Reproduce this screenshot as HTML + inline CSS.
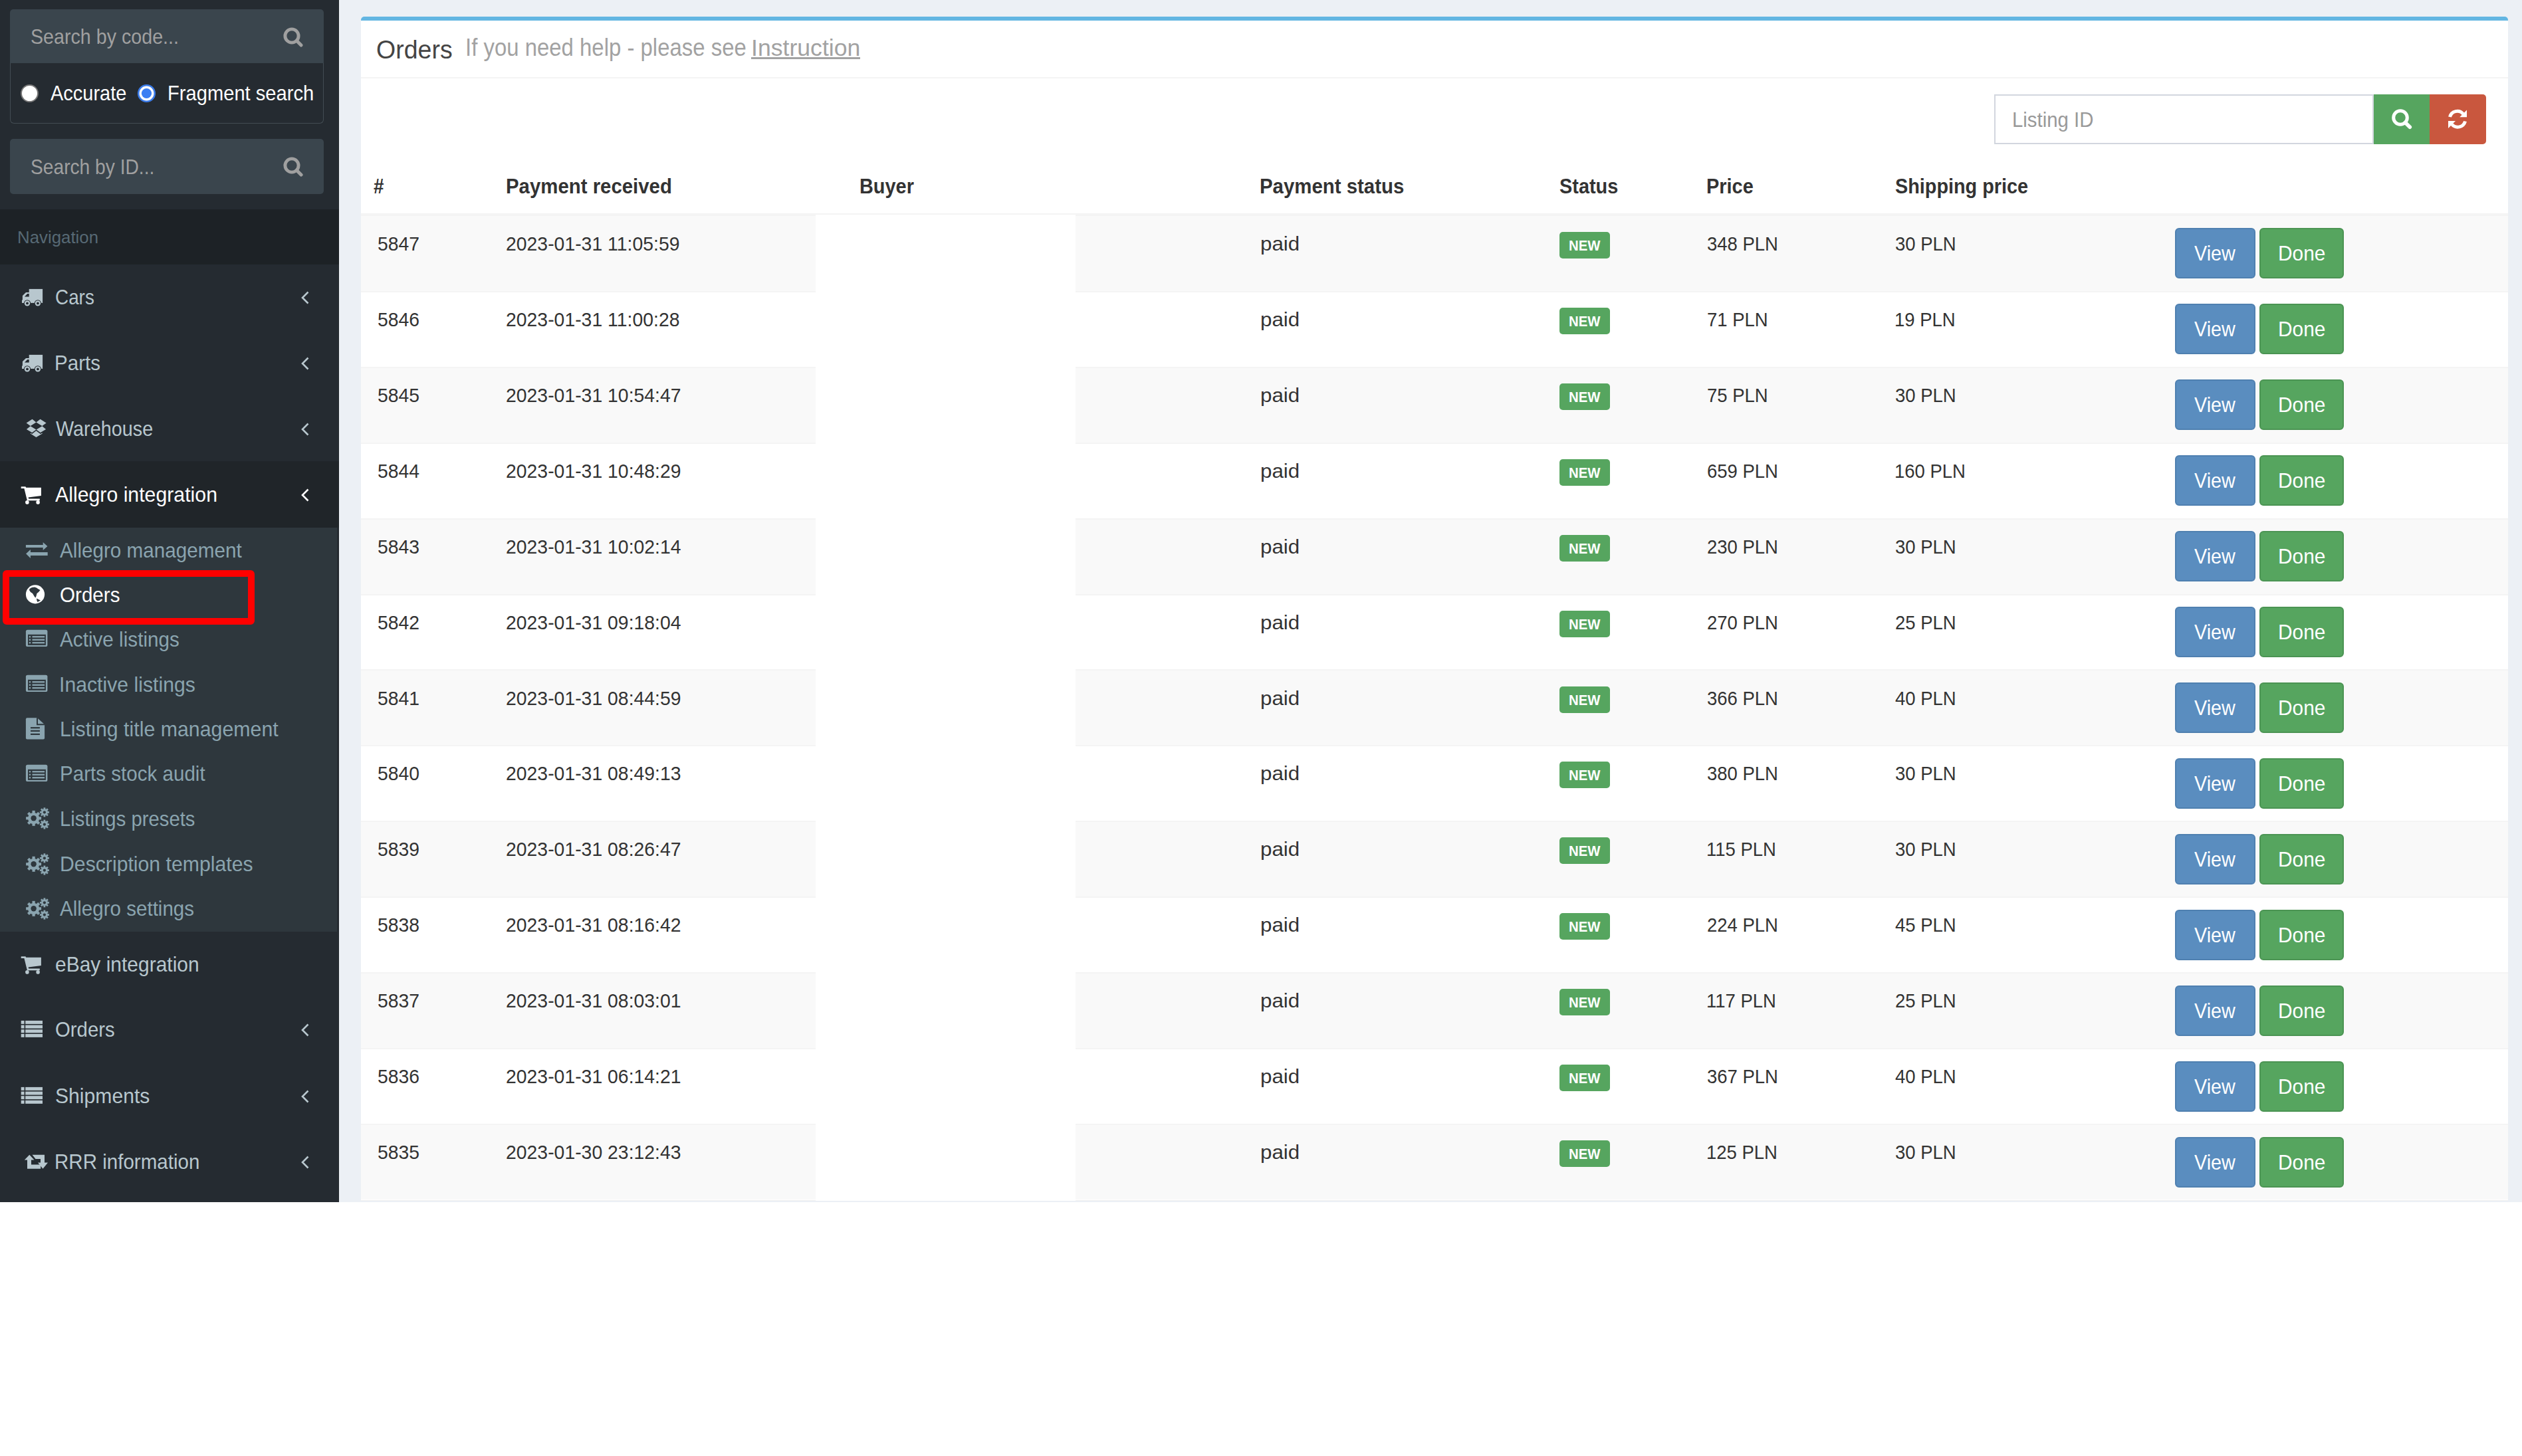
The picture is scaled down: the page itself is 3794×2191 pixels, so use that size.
<!DOCTYPE html><html><head><meta charset="utf-8"><style>
html,body{margin:0;padding:0;}
body{width:3794px;height:2191px;background:#fff;position:relative;overflow:hidden;font-family:"Liberation Sans",sans-serif;}
.t{position:absolute;white-space:nowrap;line-height:normal;transform-origin:0 0;}
.r{position:absolute;}
</style></head><body>
<div class="r" style="left:0px;top:0px;width:510px;height:1809px;background:#252b31;"></div>
<div class="r" style="left:15px;top:14px;width:472px;height:81px;background:#3a454d;border-radius:5px 5px 0 0;"></div>
<div class="r" style="left:15px;top:95px;width:472px;height:91px;background:transparent;box-sizing:border-box;border:1px solid #434c53;border-top:none;border-radius:0 0 6px 6px;"></div>
<div class="t" style="left:45.71px;top:38.20px;font-size:30.5px;color:#a0a0a0;transform:scaleX(0.9393);">Search by code...</div>
<svg class="r" style="left:419.4px;top:33.6px;" width="40" height="40" viewBox="0 0 40 40"><circle cx="20" cy="20" r="10.1" fill="none" stroke="#a0a0a0" stroke-width="4.9"/><line x1="27.27" y1="27.27" x2="34.00" y2="34.00" stroke="#a0a0a0" stroke-width="5.2" stroke-linecap="round"/></svg>
<svg class="r" style="left:30px;top:126px;" width="29" height="29" viewBox="0 0 29 29"><circle cx="14.5" cy="14.5" r="12.5" fill="#fff" stroke="#767676" stroke-width="2"/></svg>
<svg class="r" style="left:206px;top:126px;" width="29" height="29" viewBox="0 0 29 29"><circle cx="14.5" cy="14.5" r="12.3" fill="#fff" stroke="#3b7be8" stroke-width="2.6"/><circle cx="14.5" cy="14.5" r="7.6" fill="#3b7ef3"/></svg>
<div class="t" style="left:75.93px;top:122.50px;font-size:30.5px;color:#fff;transform:scaleX(0.9500);">Accurate</div>
<div class="t" style="left:251.60px;top:122.50px;font-size:30.5px;color:#fff;transform:scaleX(0.9554);">Fragment search</div>
<div class="r" style="left:15px;top:209px;width:472px;height:83px;background:#3a454d;border-radius:5px;"></div>
<div class="t" style="left:45.73px;top:233.70px;font-size:30.5px;color:#a0a0a0;transform:scaleX(0.9238);">Search by ID...</div>
<svg class="r" style="left:419.4px;top:228.6px;" width="40" height="40" viewBox="0 0 40 40"><circle cx="20" cy="20" r="10.1" fill="none" stroke="#a0a0a0" stroke-width="4.9"/><line x1="27.27" y1="27.27" x2="34.00" y2="34.00" stroke="#a0a0a0" stroke-width="5.2" stroke-linecap="round"/></svg>
<div class="r" style="left:0px;top:315px;width:510px;height:83px;background:#1d2226;"></div>
<div class="t" style="left:25.57px;top:342.30px;font-size:26.5px;color:#576974;transform:scaleX(0.9747);">Navigation</div>
<div class="r" style="left:0px;top:694px;width:510px;height:100px;background:#202529;"></div>
<div class="r" style="left:0px;top:794px;width:507px;height:608px;background:#2e373d;"></div>
<div class="t" style="left:82.61px;top:430.00px;font-size:30.5px;color:#b8c7ce;transform:scaleX(0.9137);">Cars</div>
<svg class="r" style="left:32px;top:434px;" width="34" height="28" viewBox="0 0 34 28"><g fill="#b8c7ce"><rect x="11.7" y="0.9" width="20.4" height="21"/><path d="M1.9 21.9 V11 L7 5.9 H12 V21.9 Z"/><rect x="1" y="17.5" width="2" height="4.4"/></g>
        <path d="M5 12.6 L9.2 8 H11.7 V12.6 Z" fill="#252b31"/>
        <circle cx="9" cy="22.4" r="5.2" fill="#252b31"/><circle cx="24.9" cy="22.4" r="5.2" fill="#252b31"/>
        <circle cx="9" cy="22.4" r="4.2" fill="#b8c7ce"/><circle cx="24.9" cy="22.4" r="4.2" fill="#b8c7ce"/>
        <circle cx="9" cy="22.4" r="1.9" fill="#252b31"/><circle cx="24.9" cy="22.4" r="1.9" fill="#252b31"/></svg>
<svg class="r" style="left:452px;top:438px;" width="14" height="20" viewBox="0 0 14 20"><path d="M11.5 1.5 L3 10 L11.5 18.5" fill="none" stroke="#b8c7ce" stroke-width="2.6"/></svg>
<div class="t" style="left:81.56px;top:529.00px;font-size:30.5px;color:#b8c7ce;transform:scaleX(0.9685);">Parts</div>
<svg class="r" style="left:32px;top:533px;" width="34" height="28" viewBox="0 0 34 28"><g fill="#b8c7ce"><rect x="11.7" y="0.9" width="20.4" height="21"/><path d="M1.9 21.9 V11 L7 5.9 H12 V21.9 Z"/><rect x="1" y="17.5" width="2" height="4.4"/></g>
        <path d="M5 12.6 L9.2 8 H11.7 V12.6 Z" fill="#252b31"/>
        <circle cx="9" cy="22.4" r="5.2" fill="#252b31"/><circle cx="24.9" cy="22.4" r="5.2" fill="#252b31"/>
        <circle cx="9" cy="22.4" r="4.2" fill="#b8c7ce"/><circle cx="24.9" cy="22.4" r="4.2" fill="#b8c7ce"/>
        <circle cx="9" cy="22.4" r="1.9" fill="#252b31"/><circle cx="24.9" cy="22.4" r="1.9" fill="#252b31"/></svg>
<svg class="r" style="left:452px;top:537px;" width="14" height="20" viewBox="0 0 14 20"><path d="M11.5 1.5 L3 10 L11.5 18.5" fill="none" stroke="#b8c7ce" stroke-width="2.6"/></svg>
<div class="t" style="left:83.86px;top:628.00px;font-size:30.5px;color:#b8c7ce;transform:scaleX(0.9440);">Warehouse</div>
<svg class="r" style="left:39px;top:630px;" width="31" height="28" viewBox="0 0 31 28"><g fill="#b8c7ce"><path d="M9.5 0.7 L15.4 5.5 L6.8 11 L0.6 6.4 Z"/><path d="M21.6 0.7 L30.6 6.4 L24.4 11 L15.4 5.5 Z"/><path d="M0.9 16 L6.8 11.3 L15.4 16.6 L9.2 20.9 Z"/><path d="M30.1 16 L24.4 11.3 L15.6 16.6 L21.8 20.9 Z"/><path d="M6.8 21.6 L9.2 23.1 L15.4 18.2 L21.8 23.1 L24.7 21.6 V22.4 L15.4 27.9 L6.8 22.6 Z"/></g></svg>
<svg class="r" style="left:452px;top:636px;" width="14" height="20" viewBox="0 0 14 20"><path d="M11.5 1.5 L3 10 L11.5 18.5" fill="none" stroke="#b8c7ce" stroke-width="2.6"/></svg>
<div class="t" style="left:82.92px;top:727.00px;font-size:30.5px;color:#fff;transform:scaleX(0.9924);">Allegro integration</div>
<svg class="r" style="left:31px;top:731px;" width="32" height="29" viewBox="0 0 32 29"><g fill="#fff"><path d="M0.7 1.2 H7.4 L8.3 2.7 H30.9 V15.1 L11.6 17.6 L12.2 19.4 H28.8 V22.2 H9.9 L5.4 4.1 H0.7 Z"/><circle cx="9.9" cy="24.9" r="2.8"/><circle cx="26.1" cy="24.9" r="2.8"/></g></svg>
<svg class="r" style="left:452px;top:735px;" width="14" height="20" viewBox="0 0 14 20"><path d="M11.5 1.5 L3 10 L11.5 18.5" fill="none" stroke="#fff" stroke-width="2.6"/></svg>
<div class="t" style="left:82.73px;top:1434.00px;font-size:30.5px;color:#b8c7ce;transform:scaleX(0.9831);">eBay integration</div>
<svg class="r" style="left:31px;top:1438px;" width="32" height="29" viewBox="0 0 32 29"><g fill="#b8c7ce"><path d="M0.7 1.2 H7.4 L8.3 2.7 H30.9 V15.1 L11.6 17.6 L12.2 19.4 H28.8 V22.2 H9.9 L5.4 4.1 H0.7 Z"/><circle cx="9.9" cy="24.9" r="2.8"/><circle cx="26.1" cy="24.9" r="2.8"/></g></svg>
<div class="t" style="left:82.61px;top:1532.00px;font-size:30.5px;color:#b8c7ce;transform:scaleX(0.9624);">Orders</div>
<svg class="r" style="left:31px;top:1535px;" width="34" height="28" viewBox="0 0 34 28"><rect x="0.7" y="0.90" width="4.9" height="5" fill="#b8c7ce"/><rect x="7.2" y="0.90" width="25.8" height="5" fill="#b8c7ce"/><rect x="0.7" y="7.55" width="4.9" height="5" fill="#b8c7ce"/><rect x="7.2" y="7.55" width="25.8" height="5" fill="#b8c7ce"/><rect x="0.7" y="14.20" width="4.9" height="5" fill="#b8c7ce"/><rect x="7.2" y="14.20" width="25.8" height="5" fill="#b8c7ce"/><rect x="0.7" y="20.85" width="4.9" height="5" fill="#b8c7ce"/><rect x="7.2" y="20.85" width="25.8" height="5" fill="#b8c7ce"/></svg>
<svg class="r" style="left:452px;top:1540px;" width="14" height="20" viewBox="0 0 14 20"><path d="M11.5 1.5 L3 10 L11.5 18.5" fill="none" stroke="#b8c7ce" stroke-width="2.6"/></svg>
<div class="t" style="left:82.64px;top:1631.50px;font-size:30.5px;color:#b8c7ce;transform:scaleX(0.9882);">Shipments</div>
<svg class="r" style="left:31px;top:1634.5px;" width="34" height="28" viewBox="0 0 34 28"><rect x="0.7" y="0.90" width="4.9" height="5" fill="#b8c7ce"/><rect x="7.2" y="0.90" width="25.8" height="5" fill="#b8c7ce"/><rect x="0.7" y="7.55" width="4.9" height="5" fill="#b8c7ce"/><rect x="7.2" y="7.55" width="25.8" height="5" fill="#b8c7ce"/><rect x="0.7" y="14.20" width="4.9" height="5" fill="#b8c7ce"/><rect x="7.2" y="14.20" width="25.8" height="5" fill="#b8c7ce"/><rect x="0.7" y="20.85" width="4.9" height="5" fill="#b8c7ce"/><rect x="7.2" y="20.85" width="25.8" height="5" fill="#b8c7ce"/></svg>
<svg class="r" style="left:452px;top:1639.5px;" width="14" height="20" viewBox="0 0 14 20"><path d="M11.5 1.5 L3 10 L11.5 18.5" fill="none" stroke="#b8c7ce" stroke-width="2.6"/></svg>
<div class="t" style="left:81.56px;top:1730.75px;font-size:30.5px;color:#b8c7ce;transform:scaleX(0.9684);">RRR information</div>
<svg class="r" style="left:36px;top:1737.0px;" width="37" height="23" viewBox="0 0 37 23"><g fill="#b8c7ce"><path d="M8.3 0.8 L15.5 8.6 H11 V15.6 H25.2 V21.8 H5 V8.6 H0.8 Z"/><path d="M12.5 0.8 H31 V12.6 H36 L28.5 21.8 L21 12.6 H25 V7 H17.5 Z"/></g></svg>
<svg class="r" style="left:452px;top:1738.75px;" width="14" height="20" viewBox="0 0 14 20"><path d="M11.5 1.5 L3 10 L11.5 18.5" fill="none" stroke="#b8c7ce" stroke-width="2.6"/></svg>
<div class="t" style="left:90.43px;top:810.75px;font-size:30.5px;color:#8aa4af;transform:scaleX(0.9728);">Allegro management</div>
<svg class="r" style="left:38px;top:815.0px;" width="35" height="26" viewBox="0 0 35 26"><g fill="#8aa4af"><path d="M0.9 5.1 H26.7 V1 L33.4 7 L26.7 13 V8.9 H0.9 Z"/><path d="M33.7 16 H7.9 V11.9 L1.1 18.3 L7.9 25.1 V21 H33.7 Z"/></g></svg>
<div class="t" style="left:89.59px;top:877.75px;font-size:30.5px;color:#fff;transform:scaleX(0.9706);">Orders</div>
<svg class="r" style="left:38px;top:879.0px;" width="30" height="30" viewBox="0 0 30 30"><circle cx="15" cy="15.4" r="14.1" fill="#fff"/><path d="M6.5 7 L10 5 L14 4.5 L17 5.5 L19 7 L22.5 9 L20 12 L17.5 14 L16.5 18 L15.5 20.5 L14 19 L11 14 L8 12 L6 9 Z M17 21.5 L20 23 L23 24.5 L18.5 27 L17.5 25 Z" fill="#2e373d"/></svg>
<div class="t" style="left:90.43px;top:944.50px;font-size:30.5px;color:#8aa4af;transform:scaleX(0.9735);">Active listings</div>
<svg class="r" style="left:38px;top:947.0px;" width="35" height="27" viewBox="0 0 35 27"><rect x="0.9" y="0.7" width="32.5" height="25.4" rx="2.6" fill="#8aa4af"/><rect x="4" y="7.8" width="26.9" height="16.1" fill="#2e373d"/><rect x="5.8" y="10.10" width="2.3" height="2.3" fill="#8aa4af"/><rect x="10.5" y="10.10" width="18.6" height="2.3" fill="#8aa4af"/><rect x="5.8" y="14.60" width="2.3" height="2.3" fill="#8aa4af"/><rect x="10.5" y="14.60" width="18.6" height="2.3" fill="#8aa4af"/><rect x="5.8" y="19.10" width="2.3" height="2.3" fill="#8aa4af"/><rect x="10.5" y="19.10" width="18.6" height="2.3" fill="#8aa4af"/></svg>
<div class="t" style="left:89.21px;top:1012.50px;font-size:30.5px;color:#8aa4af;transform:scaleX(0.9906);">Inactive listings</div>
<svg class="r" style="left:38px;top:1015.0px;" width="35" height="27" viewBox="0 0 35 27"><rect x="0.9" y="0.7" width="32.5" height="25.4" rx="2.6" fill="#8aa4af"/><rect x="4" y="7.8" width="26.9" height="16.1" fill="#2e373d"/><rect x="5.8" y="10.10" width="2.3" height="2.3" fill="#8aa4af"/><rect x="10.5" y="10.10" width="18.6" height="2.3" fill="#8aa4af"/><rect x="5.8" y="14.60" width="2.3" height="2.3" fill="#8aa4af"/><rect x="10.5" y="14.60" width="18.6" height="2.3" fill="#8aa4af"/><rect x="5.8" y="19.10" width="2.3" height="2.3" fill="#8aa4af"/><rect x="10.5" y="19.10" width="18.6" height="2.3" fill="#8aa4af"/></svg>
<div class="t" style="left:89.50px;top:1079.50px;font-size:30.5px;color:#8aa4af;transform:scaleX(0.9943);">Listing title management</div>
<svg class="r" style="left:38px;top:1080.0px;" width="30" height="33" viewBox="0 0 30 33"><path d="M0.9 2.3 Q0.9 0.3 2.9 0.3 H18 L29.1 10.2 V30.4 Q29.1 32.4 27.1 32.4 H2.9 Q0.9 32.4 0.9 30.4 Z" fill="#8aa4af"/><path d="M18 0.3 V10.2 H29.1" fill="none" stroke="#2e373d" stroke-width="2"/><g fill="#2e373d"><rect x="8" y="14.1" width="13.9" height="2.2"/><rect x="8" y="18.8" width="13.9" height="2.2"/><rect x="8" y="23.8" width="13.9" height="2.2"/></g></svg>
<div class="t" style="left:89.56px;top:1147.00px;font-size:30.5px;color:#8aa4af;transform:scaleX(0.9698);">Parts stock audit</div>
<svg class="r" style="left:38px;top:1149.5px;" width="35" height="27" viewBox="0 0 35 27"><rect x="0.9" y="0.7" width="32.5" height="25.4" rx="2.6" fill="#8aa4af"/><rect x="4" y="7.8" width="26.9" height="16.1" fill="#2e373d"/><rect x="5.8" y="10.10" width="2.3" height="2.3" fill="#8aa4af"/><rect x="10.5" y="10.10" width="18.6" height="2.3" fill="#8aa4af"/><rect x="5.8" y="14.60" width="2.3" height="2.3" fill="#8aa4af"/><rect x="10.5" y="14.60" width="18.6" height="2.3" fill="#8aa4af"/><rect x="5.8" y="19.10" width="2.3" height="2.3" fill="#8aa4af"/><rect x="10.5" y="19.10" width="18.6" height="2.3" fill="#8aa4af"/></svg>
<div class="t" style="left:89.58px;top:1214.50px;font-size:30.5px;color:#8aa4af;transform:scaleX(0.9601);">Listings presets</div>
<svg class="r" style="left:38px;top:1213.0px;" width="37" height="36" viewBox="0 0 37 36"><circle cx="12.6" cy="18.3" r="8.6" fill="#8aa4af"/><rect x="10.50" y="6.80" width="4.2" height="3.90" fill="#8aa4af" transform="rotate(0.0 12.6 18.3)"/><rect x="10.50" y="6.80" width="4.2" height="3.90" fill="#8aa4af" transform="rotate(45.0 12.6 18.3)"/><rect x="10.50" y="6.80" width="4.2" height="3.90" fill="#8aa4af" transform="rotate(90.0 12.6 18.3)"/><rect x="10.50" y="6.80" width="4.2" height="3.90" fill="#8aa4af" transform="rotate(135.0 12.6 18.3)"/><rect x="10.50" y="6.80" width="4.2" height="3.90" fill="#8aa4af" transform="rotate(180.0 12.6 18.3)"/><rect x="10.50" y="6.80" width="4.2" height="3.90" fill="#8aa4af" transform="rotate(225.0 12.6 18.3)"/><rect x="10.50" y="6.80" width="4.2" height="3.90" fill="#8aa4af" transform="rotate(270.0 12.6 18.3)"/><rect x="10.50" y="6.80" width="4.2" height="3.90" fill="#8aa4af" transform="rotate(315.0 12.6 18.3)"/><circle cx="12.6" cy="18.3" r="4.2" fill="#2e373d"/><circle cx="28.9" cy="9.3" r="5" fill="#8aa4af"/><rect x="27.50" y="2.30" width="2.8" height="3.00" fill="#8aa4af" transform="rotate(0.0 28.9 9.3)"/><rect x="27.50" y="2.30" width="2.8" height="3.00" fill="#8aa4af" transform="rotate(45.0 28.9 9.3)"/><rect x="27.50" y="2.30" width="2.8" height="3.00" fill="#8aa4af" transform="rotate(90.0 28.9 9.3)"/><rect x="27.50" y="2.30" width="2.8" height="3.00" fill="#8aa4af" transform="rotate(135.0 28.9 9.3)"/><rect x="27.50" y="2.30" width="2.8" height="3.00" fill="#8aa4af" transform="rotate(180.0 28.9 9.3)"/><rect x="27.50" y="2.30" width="2.8" height="3.00" fill="#8aa4af" transform="rotate(225.0 28.9 9.3)"/><rect x="27.50" y="2.30" width="2.8" height="3.00" fill="#8aa4af" transform="rotate(270.0 28.9 9.3)"/><rect x="27.50" y="2.30" width="2.8" height="3.00" fill="#8aa4af" transform="rotate(315.0 28.9 9.3)"/><circle cx="28.9" cy="9.3" r="2.1" fill="#2e373d"/><circle cx="28.9" cy="27.6" r="5" fill="#8aa4af"/><rect x="27.50" y="20.60" width="2.8" height="3.00" fill="#8aa4af" transform="rotate(0.0 28.9 27.6)"/><rect x="27.50" y="20.60" width="2.8" height="3.00" fill="#8aa4af" transform="rotate(45.0 28.9 27.6)"/><rect x="27.50" y="20.60" width="2.8" height="3.00" fill="#8aa4af" transform="rotate(90.0 28.9 27.6)"/><rect x="27.50" y="20.60" width="2.8" height="3.00" fill="#8aa4af" transform="rotate(135.0 28.9 27.6)"/><rect x="27.50" y="20.60" width="2.8" height="3.00" fill="#8aa4af" transform="rotate(180.0 28.9 27.6)"/><rect x="27.50" y="20.60" width="2.8" height="3.00" fill="#8aa4af" transform="rotate(225.0 28.9 27.6)"/><rect x="27.50" y="20.60" width="2.8" height="3.00" fill="#8aa4af" transform="rotate(270.0 28.9 27.6)"/><rect x="27.50" y="20.60" width="2.8" height="3.00" fill="#8aa4af" transform="rotate(315.0 28.9 27.6)"/><circle cx="28.9" cy="27.6" r="2.1" fill="#2e373d"/></svg>
<div class="t" style="left:89.51px;top:1283.25px;font-size:30.5px;color:#8aa4af;transform:scaleX(0.9908);">Description templates</div>
<svg class="r" style="left:38px;top:1281.75px;" width="37" height="36" viewBox="0 0 37 36"><circle cx="12.6" cy="18.3" r="8.6" fill="#8aa4af"/><rect x="10.50" y="6.80" width="4.2" height="3.90" fill="#8aa4af" transform="rotate(0.0 12.6 18.3)"/><rect x="10.50" y="6.80" width="4.2" height="3.90" fill="#8aa4af" transform="rotate(45.0 12.6 18.3)"/><rect x="10.50" y="6.80" width="4.2" height="3.90" fill="#8aa4af" transform="rotate(90.0 12.6 18.3)"/><rect x="10.50" y="6.80" width="4.2" height="3.90" fill="#8aa4af" transform="rotate(135.0 12.6 18.3)"/><rect x="10.50" y="6.80" width="4.2" height="3.90" fill="#8aa4af" transform="rotate(180.0 12.6 18.3)"/><rect x="10.50" y="6.80" width="4.2" height="3.90" fill="#8aa4af" transform="rotate(225.0 12.6 18.3)"/><rect x="10.50" y="6.80" width="4.2" height="3.90" fill="#8aa4af" transform="rotate(270.0 12.6 18.3)"/><rect x="10.50" y="6.80" width="4.2" height="3.90" fill="#8aa4af" transform="rotate(315.0 12.6 18.3)"/><circle cx="12.6" cy="18.3" r="4.2" fill="#2e373d"/><circle cx="28.9" cy="9.3" r="5" fill="#8aa4af"/><rect x="27.50" y="2.30" width="2.8" height="3.00" fill="#8aa4af" transform="rotate(0.0 28.9 9.3)"/><rect x="27.50" y="2.30" width="2.8" height="3.00" fill="#8aa4af" transform="rotate(45.0 28.9 9.3)"/><rect x="27.50" y="2.30" width="2.8" height="3.00" fill="#8aa4af" transform="rotate(90.0 28.9 9.3)"/><rect x="27.50" y="2.30" width="2.8" height="3.00" fill="#8aa4af" transform="rotate(135.0 28.9 9.3)"/><rect x="27.50" y="2.30" width="2.8" height="3.00" fill="#8aa4af" transform="rotate(180.0 28.9 9.3)"/><rect x="27.50" y="2.30" width="2.8" height="3.00" fill="#8aa4af" transform="rotate(225.0 28.9 9.3)"/><rect x="27.50" y="2.30" width="2.8" height="3.00" fill="#8aa4af" transform="rotate(270.0 28.9 9.3)"/><rect x="27.50" y="2.30" width="2.8" height="3.00" fill="#8aa4af" transform="rotate(315.0 28.9 9.3)"/><circle cx="28.9" cy="9.3" r="2.1" fill="#2e373d"/><circle cx="28.9" cy="27.6" r="5" fill="#8aa4af"/><rect x="27.50" y="20.60" width="2.8" height="3.00" fill="#8aa4af" transform="rotate(0.0 28.9 27.6)"/><rect x="27.50" y="20.60" width="2.8" height="3.00" fill="#8aa4af" transform="rotate(45.0 28.9 27.6)"/><rect x="27.50" y="20.60" width="2.8" height="3.00" fill="#8aa4af" transform="rotate(90.0 28.9 27.6)"/><rect x="27.50" y="20.60" width="2.8" height="3.00" fill="#8aa4af" transform="rotate(135.0 28.9 27.6)"/><rect x="27.50" y="20.60" width="2.8" height="3.00" fill="#8aa4af" transform="rotate(180.0 28.9 27.6)"/><rect x="27.50" y="20.60" width="2.8" height="3.00" fill="#8aa4af" transform="rotate(225.0 28.9 27.6)"/><rect x="27.50" y="20.60" width="2.8" height="3.00" fill="#8aa4af" transform="rotate(270.0 28.9 27.6)"/><rect x="27.50" y="20.60" width="2.8" height="3.00" fill="#8aa4af" transform="rotate(315.0 28.9 27.6)"/><circle cx="28.9" cy="27.6" r="2.1" fill="#2e373d"/></svg>
<div class="t" style="left:90.43px;top:1350.00px;font-size:30.5px;color:#8aa4af;transform:scaleX(0.9691);">Allegro settings</div>
<svg class="r" style="left:38px;top:1348.5px;" width="37" height="36" viewBox="0 0 37 36"><circle cx="12.6" cy="18.3" r="8.6" fill="#8aa4af"/><rect x="10.50" y="6.80" width="4.2" height="3.90" fill="#8aa4af" transform="rotate(0.0 12.6 18.3)"/><rect x="10.50" y="6.80" width="4.2" height="3.90" fill="#8aa4af" transform="rotate(45.0 12.6 18.3)"/><rect x="10.50" y="6.80" width="4.2" height="3.90" fill="#8aa4af" transform="rotate(90.0 12.6 18.3)"/><rect x="10.50" y="6.80" width="4.2" height="3.90" fill="#8aa4af" transform="rotate(135.0 12.6 18.3)"/><rect x="10.50" y="6.80" width="4.2" height="3.90" fill="#8aa4af" transform="rotate(180.0 12.6 18.3)"/><rect x="10.50" y="6.80" width="4.2" height="3.90" fill="#8aa4af" transform="rotate(225.0 12.6 18.3)"/><rect x="10.50" y="6.80" width="4.2" height="3.90" fill="#8aa4af" transform="rotate(270.0 12.6 18.3)"/><rect x="10.50" y="6.80" width="4.2" height="3.90" fill="#8aa4af" transform="rotate(315.0 12.6 18.3)"/><circle cx="12.6" cy="18.3" r="4.2" fill="#2e373d"/><circle cx="28.9" cy="9.3" r="5" fill="#8aa4af"/><rect x="27.50" y="2.30" width="2.8" height="3.00" fill="#8aa4af" transform="rotate(0.0 28.9 9.3)"/><rect x="27.50" y="2.30" width="2.8" height="3.00" fill="#8aa4af" transform="rotate(45.0 28.9 9.3)"/><rect x="27.50" y="2.30" width="2.8" height="3.00" fill="#8aa4af" transform="rotate(90.0 28.9 9.3)"/><rect x="27.50" y="2.30" width="2.8" height="3.00" fill="#8aa4af" transform="rotate(135.0 28.9 9.3)"/><rect x="27.50" y="2.30" width="2.8" height="3.00" fill="#8aa4af" transform="rotate(180.0 28.9 9.3)"/><rect x="27.50" y="2.30" width="2.8" height="3.00" fill="#8aa4af" transform="rotate(225.0 28.9 9.3)"/><rect x="27.50" y="2.30" width="2.8" height="3.00" fill="#8aa4af" transform="rotate(270.0 28.9 9.3)"/><rect x="27.50" y="2.30" width="2.8" height="3.00" fill="#8aa4af" transform="rotate(315.0 28.9 9.3)"/><circle cx="28.9" cy="9.3" r="2.1" fill="#2e373d"/><circle cx="28.9" cy="27.6" r="5" fill="#8aa4af"/><rect x="27.50" y="20.60" width="2.8" height="3.00" fill="#8aa4af" transform="rotate(0.0 28.9 27.6)"/><rect x="27.50" y="20.60" width="2.8" height="3.00" fill="#8aa4af" transform="rotate(45.0 28.9 27.6)"/><rect x="27.50" y="20.60" width="2.8" height="3.00" fill="#8aa4af" transform="rotate(90.0 28.9 27.6)"/><rect x="27.50" y="20.60" width="2.8" height="3.00" fill="#8aa4af" transform="rotate(135.0 28.9 27.6)"/><rect x="27.50" y="20.60" width="2.8" height="3.00" fill="#8aa4af" transform="rotate(180.0 28.9 27.6)"/><rect x="27.50" y="20.60" width="2.8" height="3.00" fill="#8aa4af" transform="rotate(225.0 28.9 27.6)"/><rect x="27.50" y="20.60" width="2.8" height="3.00" fill="#8aa4af" transform="rotate(270.0 28.9 27.6)"/><rect x="27.50" y="20.60" width="2.8" height="3.00" fill="#8aa4af" transform="rotate(315.0 28.9 27.6)"/><circle cx="28.9" cy="27.6" r="2.1" fill="#2e373d"/></svg>
<div class="r" style="left:4px;top:858px;width:379px;height:82px;background:transparent;box-sizing:border-box;border:10px solid #f00;border-radius:6px;"></div>
<div class="r" style="left:510px;top:0px;width:3284px;height:1809px;background:#ecf0f5;"></div>
<div class="r" style="left:543px;top:25px;width:3230px;height:1782px;background:#fff;border-radius:5px 5px 0 0;"></div>
<div class="r" style="left:543px;top:1806px;width:3230px;height:1px;background:#f0f0f0;"></div>
<div class="r" style="left:543px;top:25px;width:3230px;height:6px;background:#63b6e2;border-radius:5px 5px 0 0;"></div>
<div class="t" style="left:565.72px;top:52.80px;font-size:39px;color:#444;transform:scaleX(0.9618);">Orders</div>
<div class="t" style="left:700.26px;top:51.10px;font-size:36.5px;color:#a2a2a2;transform:scaleX(0.9019);">If you need help - please see</div>
<div class="t" style="left:1129.70px;top:52.60px;font-size:34.5px;color:#a2a2a2;transform:scaleX(1.0326);">Instruction</div>
<div class="r" style="left:1130px;top:86px;width:164px;height:2.700000000000003px;background:#a2a2a2;"></div>
<div class="r" style="left:543px;top:116px;width:3230px;height:2px;background:#f4f4f4;"></div>
<div class="r" style="left:3000px;top:142px;width:571px;height:75px;background:#fff;box-sizing:border-box;border:2px solid #d2d6de;"></div>
<div class="t" style="left:3027.38px;top:162.20px;font-size:32px;color:#999;transform:scaleX(0.9174);">Listing ID</div>
<div class="r" style="left:3571px;top:142px;width:85px;height:75px;background:#56a55f;"></div>
<div class="r" style="left:3655px;top:142px;width:85px;height:75px;background:#c9573e;border-radius:0 5px 5px 0;"></div>
<svg class="r" style="left:3591.1px;top:157.3px;" width="40" height="40" viewBox="0 0 40 40"><circle cx="20" cy="20" r="10.3" fill="none" stroke="#fff" stroke-width="5.0"/><line x1="27.42" y1="27.42" x2="34.30" y2="34.30" stroke="#fff" stroke-width="5.6" stroke-linecap="round"/></svg>
<svg class="r" style="left:3681px;top:163px;" width="32" height="32" viewBox="0 0 32 32"><g fill="none" stroke="#fff" stroke-width="5"><path d="M4.5 13 A11.5 11.5 0 0 1 24.5 8.5"/><path d="M27.5 19.5 A11.5 11.5 0 0 1 7.5 24"/></g><path d="M30 2.5 V13.3 H19.2 Z" fill="#fff"/><path d="M2 30 V19 H13 Z" fill="#fff"/></svg>
<div class="t" style="left:562.01px;top:263.25px;font-size:31px;color:#333;font-weight:bold;transform:scaleX(0.8952);">#</div>
<div class="t" style="left:761.02px;top:263.25px;font-size:31px;color:#333;font-weight:bold;transform:scaleX(0.9478);">Payment received</div>
<div class="t" style="left:1293.25px;top:263.25px;font-size:31px;color:#333;font-weight:bold;transform:scaleX(0.9317);">Buyer</div>
<div class="t" style="left:1895.42px;top:263.25px;font-size:31px;color:#333;font-weight:bold;transform:scaleX(0.9484);">Payment status</div>
<div class="t" style="left:2346.03px;top:263.25px;font-size:31px;color:#333;font-weight:bold;transform:scaleX(0.9326);">Status</div>
<div class="t" style="left:2567.05px;top:263.25px;font-size:31px;color:#333;font-weight:bold;transform:scaleX(0.9340);">Price</div>
<div class="t" style="left:2851.04px;top:263.25px;font-size:31px;color:#333;font-weight:bold;transform:scaleX(0.9294);">Shipping price</div>
<div class="r" style="left:543px;top:321px;width:3230px;height:4px;background:#f4f4f4;"></div>
<div class="r" style="left:543px;top:325px;width:3230px;height:113px;background:#f9f9f9;"></div>
<div class="t" style="left:567.61px;top:349.75px;font-size:29.8px;color:#333;transform:scaleX(0.9526);">5847</div>
<div class="t" style="left:761.08px;top:349.75px;font-size:29.8px;color:#333;transform:scaleX(0.9526);">2023-01-31 11:05:59</div>
<div class="t" style="left:1895.77px;top:349.75px;font-size:29.8px;color:#333;transform:scaleX(1.0491);">paid</div>
<div class="t" style="left:2567.97px;top:349.75px;font-size:29.8px;color:#333;transform:scaleX(0.9224);">348 PLN</div>
<div class="t" style="left:2850.87px;top:349.75px;font-size:29.8px;color:#333;transform:scaleX(0.9224);">30 PLN</div>
<div class="r" style="left:2346px;top:349px;width:76px;height:40px;background:#56a55f;border-radius:5px;"></div>
<div class="t" style="left:2359.63px;top:357.75px;font-size:21.5px;color:#fff;font-weight:bold;transform:scaleX(0.9446);">NEW</div>
<div class="r" style="left:3272px;top:343px;width:121px;height:76px;background:#5a8dbf;border-radius:6px;box-sizing:border-box;border:2px solid #4f80b0;"></div>
<div class="t" style="left:3301.16px;top:364.15px;font-size:30.5px;color:#fff;transform:scaleX(0.9420);">View</div>
<div class="r" style="left:3399px;top:343px;width:127px;height:76px;background:#56a55f;border-radius:6px;box-sizing:border-box;border:2px solid #4b9453;"></div>
<div class="t" style="left:3426.94px;top:364.15px;font-size:30.5px;color:#fff;transform:scaleX(0.9785);">Done</div>
<div class="r" style="left:543px;top:438px;width:3230px;height:2px;background:#f4f4f4;"></div>
<div class="t" style="left:567.61px;top:463.71px;font-size:29.8px;color:#333;transform:scaleX(0.9526);">5846</div>
<div class="t" style="left:761.08px;top:463.71px;font-size:29.8px;color:#333;transform:scaleX(0.9526);">2023-01-31 11:00:28</div>
<div class="t" style="left:1895.77px;top:463.71px;font-size:29.8px;color:#333;transform:scaleX(1.0491);">paid</div>
<div class="t" style="left:2567.63px;top:463.71px;font-size:29.8px;color:#333;transform:scaleX(0.9224);">71 PLN</div>
<div class="t" style="left:2849.84px;top:463.71px;font-size:29.8px;color:#333;transform:scaleX(0.9224);">19 PLN</div>
<div class="r" style="left:2346px;top:463px;width:76px;height:40px;background:#56a55f;border-radius:5px;"></div>
<div class="t" style="left:2359.63px;top:471.71px;font-size:21.5px;color:#fff;font-weight:bold;transform:scaleX(0.9446);">NEW</div>
<div class="r" style="left:3272px;top:457px;width:121px;height:76px;background:#5a8dbf;border-radius:6px;box-sizing:border-box;border:2px solid #4f80b0;"></div>
<div class="t" style="left:3301.16px;top:478.11px;font-size:30.5px;color:#fff;transform:scaleX(0.9420);">View</div>
<div class="r" style="left:3399px;top:457px;width:127px;height:76px;background:#56a55f;border-radius:6px;box-sizing:border-box;border:2px solid #4b9453;"></div>
<div class="t" style="left:3426.94px;top:478.11px;font-size:30.5px;color:#fff;transform:scaleX(0.9785);">Done</div>
<div class="r" style="left:543px;top:552px;width:3230px;height:114px;background:#f9f9f9;"></div>
<div class="r" style="left:543px;top:552px;width:3230px;height:2px;background:#f4f4f4;"></div>
<div class="t" style="left:567.61px;top:577.67px;font-size:29.8px;color:#333;transform:scaleX(0.9526);">5845</div>
<div class="t" style="left:761.08px;top:577.67px;font-size:29.8px;color:#333;transform:scaleX(0.9526);">2023-01-31 10:54:47</div>
<div class="t" style="left:1895.77px;top:577.67px;font-size:29.8px;color:#333;transform:scaleX(1.0491);">paid</div>
<div class="t" style="left:2567.63px;top:577.67px;font-size:29.8px;color:#333;transform:scaleX(0.9224);">75 PLN</div>
<div class="t" style="left:2850.87px;top:577.67px;font-size:29.8px;color:#333;transform:scaleX(0.9224);">30 PLN</div>
<div class="r" style="left:2346px;top:577px;width:76px;height:40px;background:#56a55f;border-radius:5px;"></div>
<div class="t" style="left:2359.63px;top:585.67px;font-size:21.5px;color:#fff;font-weight:bold;transform:scaleX(0.9446);">NEW</div>
<div class="r" style="left:3272px;top:571px;width:121px;height:76px;background:#5a8dbf;border-radius:6px;box-sizing:border-box;border:2px solid #4f80b0;"></div>
<div class="t" style="left:3301.16px;top:592.07px;font-size:30.5px;color:#fff;transform:scaleX(0.9420);">View</div>
<div class="r" style="left:3399px;top:571px;width:127px;height:76px;background:#56a55f;border-radius:6px;box-sizing:border-box;border:2px solid #4b9453;"></div>
<div class="t" style="left:3426.94px;top:592.07px;font-size:30.5px;color:#fff;transform:scaleX(0.9785);">Done</div>
<div class="r" style="left:543px;top:666px;width:3230px;height:2px;background:#f4f4f4;"></div>
<div class="t" style="left:567.61px;top:691.63px;font-size:29.8px;color:#333;transform:scaleX(0.9526);">5844</div>
<div class="t" style="left:761.08px;top:691.63px;font-size:29.8px;color:#333;transform:scaleX(0.9526);">2023-01-31 10:48:29</div>
<div class="t" style="left:1895.77px;top:691.63px;font-size:29.8px;color:#333;transform:scaleX(1.0491);">paid</div>
<div class="t" style="left:2567.63px;top:691.63px;font-size:29.8px;color:#333;transform:scaleX(0.9224);">659 PLN</div>
<div class="t" style="left:2849.84px;top:691.63px;font-size:29.8px;color:#333;transform:scaleX(0.9224);">160 PLN</div>
<div class="r" style="left:2346px;top:691px;width:76px;height:40px;background:#56a55f;border-radius:5px;"></div>
<div class="t" style="left:2359.63px;top:699.63px;font-size:21.5px;color:#fff;font-weight:bold;transform:scaleX(0.9446);">NEW</div>
<div class="r" style="left:3272px;top:685px;width:121px;height:76px;background:#5a8dbf;border-radius:6px;box-sizing:border-box;border:2px solid #4f80b0;"></div>
<div class="t" style="left:3301.16px;top:706.03px;font-size:30.5px;color:#fff;transform:scaleX(0.9420);">View</div>
<div class="r" style="left:3399px;top:685px;width:127px;height:76px;background:#56a55f;border-radius:6px;box-sizing:border-box;border:2px solid #4b9453;"></div>
<div class="t" style="left:3426.94px;top:706.03px;font-size:30.5px;color:#fff;transform:scaleX(0.9785);">Done</div>
<div class="r" style="left:543px;top:780px;width:3230px;height:114px;background:#f9f9f9;"></div>
<div class="r" style="left:543px;top:780px;width:3230px;height:2px;background:#f4f4f4;"></div>
<div class="t" style="left:567.61px;top:805.59px;font-size:29.8px;color:#333;transform:scaleX(0.9526);">5843</div>
<div class="t" style="left:761.08px;top:805.59px;font-size:29.8px;color:#333;transform:scaleX(0.9526);">2023-01-31 10:02:14</div>
<div class="t" style="left:1895.77px;top:805.59px;font-size:29.8px;color:#333;transform:scaleX(1.0491);">paid</div>
<div class="t" style="left:2567.63px;top:805.59px;font-size:29.8px;color:#333;transform:scaleX(0.9224);">230 PLN</div>
<div class="t" style="left:2850.87px;top:805.59px;font-size:29.8px;color:#333;transform:scaleX(0.9224);">30 PLN</div>
<div class="r" style="left:2346px;top:805px;width:76px;height:40px;background:#56a55f;border-radius:5px;"></div>
<div class="t" style="left:2359.63px;top:813.59px;font-size:21.5px;color:#fff;font-weight:bold;transform:scaleX(0.9446);">NEW</div>
<div class="r" style="left:3272px;top:799px;width:121px;height:76px;background:#5a8dbf;border-radius:6px;box-sizing:border-box;border:2px solid #4f80b0;"></div>
<div class="t" style="left:3301.16px;top:819.99px;font-size:30.5px;color:#fff;transform:scaleX(0.9420);">View</div>
<div class="r" style="left:3399px;top:799px;width:127px;height:76px;background:#56a55f;border-radius:6px;box-sizing:border-box;border:2px solid #4b9453;"></div>
<div class="t" style="left:3426.94px;top:819.99px;font-size:30.5px;color:#fff;transform:scaleX(0.9785);">Done</div>
<div class="r" style="left:543px;top:894px;width:3230px;height:2px;background:#f4f4f4;"></div>
<div class="t" style="left:567.61px;top:919.55px;font-size:29.8px;color:#333;transform:scaleX(0.9526);">5842</div>
<div class="t" style="left:761.08px;top:919.55px;font-size:29.8px;color:#333;transform:scaleX(0.9526);">2023-01-31 09:18:04</div>
<div class="t" style="left:1895.77px;top:919.55px;font-size:29.8px;color:#333;transform:scaleX(1.0491);">paid</div>
<div class="t" style="left:2567.63px;top:919.55px;font-size:29.8px;color:#333;transform:scaleX(0.9224);">270 PLN</div>
<div class="t" style="left:2850.53px;top:919.55px;font-size:29.8px;color:#333;transform:scaleX(0.9224);">25 PLN</div>
<div class="r" style="left:2346px;top:919px;width:76px;height:40px;background:#56a55f;border-radius:5px;"></div>
<div class="t" style="left:2359.63px;top:927.55px;font-size:21.5px;color:#fff;font-weight:bold;transform:scaleX(0.9446);">NEW</div>
<div class="r" style="left:3272px;top:913px;width:121px;height:76px;background:#5a8dbf;border-radius:6px;box-sizing:border-box;border:2px solid #4f80b0;"></div>
<div class="t" style="left:3301.16px;top:933.95px;font-size:30.5px;color:#fff;transform:scaleX(0.9420);">View</div>
<div class="r" style="left:3399px;top:913px;width:127px;height:76px;background:#56a55f;border-radius:6px;box-sizing:border-box;border:2px solid #4b9453;"></div>
<div class="t" style="left:3426.94px;top:933.95px;font-size:30.5px;color:#fff;transform:scaleX(0.9785);">Done</div>
<div class="r" style="left:543px;top:1007px;width:3230px;height:114px;background:#f9f9f9;"></div>
<div class="r" style="left:543px;top:1007px;width:3230px;height:2px;background:#f4f4f4;"></div>
<div class="t" style="left:567.61px;top:1033.51px;font-size:29.8px;color:#333;transform:scaleX(0.9526);">5841</div>
<div class="t" style="left:761.08px;top:1033.51px;font-size:29.8px;color:#333;transform:scaleX(0.9526);">2023-01-31 08:44:59</div>
<div class="t" style="left:1895.77px;top:1033.51px;font-size:29.8px;color:#333;transform:scaleX(1.0491);">paid</div>
<div class="t" style="left:2567.97px;top:1033.51px;font-size:29.8px;color:#333;transform:scaleX(0.9224);">366 PLN</div>
<div class="t" style="left:2851.28px;top:1033.51px;font-size:29.8px;color:#333;transform:scaleX(0.9224);">40 PLN</div>
<div class="r" style="left:2346px;top:1033px;width:76px;height:40px;background:#56a55f;border-radius:5px;"></div>
<div class="t" style="left:2359.63px;top:1041.51px;font-size:21.5px;color:#fff;font-weight:bold;transform:scaleX(0.9446);">NEW</div>
<div class="r" style="left:3272px;top:1027px;width:121px;height:76px;background:#5a8dbf;border-radius:6px;box-sizing:border-box;border:2px solid #4f80b0;"></div>
<div class="t" style="left:3301.16px;top:1047.91px;font-size:30.5px;color:#fff;transform:scaleX(0.9420);">View</div>
<div class="r" style="left:3399px;top:1027px;width:127px;height:76px;background:#56a55f;border-radius:6px;box-sizing:border-box;border:2px solid #4b9453;"></div>
<div class="t" style="left:3426.94px;top:1047.91px;font-size:30.5px;color:#fff;transform:scaleX(0.9785);">Done</div>
<div class="r" style="left:543px;top:1121px;width:3230px;height:2px;background:#f4f4f4;"></div>
<div class="t" style="left:567.61px;top:1147.47px;font-size:29.8px;color:#333;transform:scaleX(0.9526);">5840</div>
<div class="t" style="left:761.08px;top:1147.47px;font-size:29.8px;color:#333;transform:scaleX(0.9526);">2023-01-31 08:49:13</div>
<div class="t" style="left:1895.77px;top:1147.47px;font-size:29.8px;color:#333;transform:scaleX(1.0491);">paid</div>
<div class="t" style="left:2567.97px;top:1147.47px;font-size:29.8px;color:#333;transform:scaleX(0.9224);">380 PLN</div>
<div class="t" style="left:2850.87px;top:1147.47px;font-size:29.8px;color:#333;transform:scaleX(0.9224);">30 PLN</div>
<div class="r" style="left:2346px;top:1146px;width:76px;height:40px;background:#56a55f;border-radius:5px;"></div>
<div class="t" style="left:2359.63px;top:1155.47px;font-size:21.5px;color:#fff;font-weight:bold;transform:scaleX(0.9446);">NEW</div>
<div class="r" style="left:3272px;top:1141px;width:121px;height:76px;background:#5a8dbf;border-radius:6px;box-sizing:border-box;border:2px solid #4f80b0;"></div>
<div class="t" style="left:3301.16px;top:1161.87px;font-size:30.5px;color:#fff;transform:scaleX(0.9420);">View</div>
<div class="r" style="left:3399px;top:1141px;width:127px;height:76px;background:#56a55f;border-radius:6px;box-sizing:border-box;border:2px solid #4b9453;"></div>
<div class="t" style="left:3426.94px;top:1161.87px;font-size:30.5px;color:#fff;transform:scaleX(0.9785);">Done</div>
<div class="r" style="left:543px;top:1235px;width:3230px;height:114px;background:#f9f9f9;"></div>
<div class="r" style="left:543px;top:1235px;width:3230px;height:2px;background:#f4f4f4;"></div>
<div class="t" style="left:567.61px;top:1261.43px;font-size:29.8px;color:#333;transform:scaleX(0.9526);">5839</div>
<div class="t" style="left:761.08px;top:1261.43px;font-size:29.8px;color:#333;transform:scaleX(0.9526);">2023-01-31 08:26:47</div>
<div class="t" style="left:1895.77px;top:1261.43px;font-size:29.8px;color:#333;transform:scaleX(1.0491);">paid</div>
<div class="t" style="left:2566.94px;top:1261.43px;font-size:29.8px;color:#333;transform:scaleX(0.9224);">115 PLN</div>
<div class="t" style="left:2850.87px;top:1261.43px;font-size:29.8px;color:#333;transform:scaleX(0.9224);">30 PLN</div>
<div class="r" style="left:2346px;top:1260px;width:76px;height:40px;background:#56a55f;border-radius:5px;"></div>
<div class="t" style="left:2359.63px;top:1269.43px;font-size:21.5px;color:#fff;font-weight:bold;transform:scaleX(0.9446);">NEW</div>
<div class="r" style="left:3272px;top:1255px;width:121px;height:76px;background:#5a8dbf;border-radius:6px;box-sizing:border-box;border:2px solid #4f80b0;"></div>
<div class="t" style="left:3301.16px;top:1275.83px;font-size:30.5px;color:#fff;transform:scaleX(0.9420);">View</div>
<div class="r" style="left:3399px;top:1255px;width:127px;height:76px;background:#56a55f;border-radius:6px;box-sizing:border-box;border:2px solid #4b9453;"></div>
<div class="t" style="left:3426.94px;top:1275.83px;font-size:30.5px;color:#fff;transform:scaleX(0.9785);">Done</div>
<div class="r" style="left:543px;top:1349px;width:3230px;height:2px;background:#f4f4f4;"></div>
<div class="t" style="left:567.61px;top:1375.39px;font-size:29.8px;color:#333;transform:scaleX(0.9526);">5838</div>
<div class="t" style="left:761.08px;top:1375.39px;font-size:29.8px;color:#333;transform:scaleX(0.9526);">2023-01-31 08:16:42</div>
<div class="t" style="left:1895.77px;top:1375.39px;font-size:29.8px;color:#333;transform:scaleX(1.0491);">paid</div>
<div class="t" style="left:2567.63px;top:1375.39px;font-size:29.8px;color:#333;transform:scaleX(0.9224);">224 PLN</div>
<div class="t" style="left:2851.28px;top:1375.39px;font-size:29.8px;color:#333;transform:scaleX(0.9224);">45 PLN</div>
<div class="r" style="left:2346px;top:1374px;width:76px;height:40px;background:#56a55f;border-radius:5px;"></div>
<div class="t" style="left:2359.63px;top:1383.39px;font-size:21.5px;color:#fff;font-weight:bold;transform:scaleX(0.9446);">NEW</div>
<div class="r" style="left:3272px;top:1369px;width:121px;height:76px;background:#5a8dbf;border-radius:6px;box-sizing:border-box;border:2px solid #4f80b0;"></div>
<div class="t" style="left:3301.16px;top:1389.79px;font-size:30.5px;color:#fff;transform:scaleX(0.9420);">View</div>
<div class="r" style="left:3399px;top:1369px;width:127px;height:76px;background:#56a55f;border-radius:6px;box-sizing:border-box;border:2px solid #4b9453;"></div>
<div class="t" style="left:3426.94px;top:1389.79px;font-size:30.5px;color:#fff;transform:scaleX(0.9785);">Done</div>
<div class="r" style="left:543px;top:1463px;width:3230px;height:114px;background:#f9f9f9;"></div>
<div class="r" style="left:543px;top:1463px;width:3230px;height:2px;background:#f4f4f4;"></div>
<div class="t" style="left:567.61px;top:1489.35px;font-size:29.8px;color:#333;transform:scaleX(0.9526);">5837</div>
<div class="t" style="left:761.08px;top:1489.35px;font-size:29.8px;color:#333;transform:scaleX(0.9526);">2023-01-31 08:03:01</div>
<div class="t" style="left:1895.77px;top:1489.35px;font-size:29.8px;color:#333;transform:scaleX(1.0491);">paid</div>
<div class="t" style="left:2566.94px;top:1489.35px;font-size:29.8px;color:#333;transform:scaleX(0.9224);">117 PLN</div>
<div class="t" style="left:2850.53px;top:1489.35px;font-size:29.8px;color:#333;transform:scaleX(0.9224);">25 PLN</div>
<div class="r" style="left:2346px;top:1488px;width:76px;height:40px;background:#56a55f;border-radius:5px;"></div>
<div class="t" style="left:2359.63px;top:1497.35px;font-size:21.5px;color:#fff;font-weight:bold;transform:scaleX(0.9446);">NEW</div>
<div class="r" style="left:3272px;top:1483px;width:121px;height:76px;background:#5a8dbf;border-radius:6px;box-sizing:border-box;border:2px solid #4f80b0;"></div>
<div class="t" style="left:3301.16px;top:1503.75px;font-size:30.5px;color:#fff;transform:scaleX(0.9420);">View</div>
<div class="r" style="left:3399px;top:1483px;width:127px;height:76px;background:#56a55f;border-radius:6px;box-sizing:border-box;border:2px solid #4b9453;"></div>
<div class="t" style="left:3426.94px;top:1503.75px;font-size:30.5px;color:#fff;transform:scaleX(0.9785);">Done</div>
<div class="r" style="left:543px;top:1577px;width:3230px;height:2px;background:#f4f4f4;"></div>
<div class="t" style="left:567.61px;top:1603.31px;font-size:29.8px;color:#333;transform:scaleX(0.9526);">5836</div>
<div class="t" style="left:761.08px;top:1603.31px;font-size:29.8px;color:#333;transform:scaleX(0.9526);">2023-01-31 06:14:21</div>
<div class="t" style="left:1895.77px;top:1603.31px;font-size:29.8px;color:#333;transform:scaleX(1.0491);">paid</div>
<div class="t" style="left:2567.97px;top:1603.31px;font-size:29.8px;color:#333;transform:scaleX(0.9224);">367 PLN</div>
<div class="t" style="left:2851.28px;top:1603.31px;font-size:29.8px;color:#333;transform:scaleX(0.9224);">40 PLN</div>
<div class="r" style="left:2346px;top:1602px;width:76px;height:40px;background:#56a55f;border-radius:5px;"></div>
<div class="t" style="left:2359.63px;top:1611.31px;font-size:21.5px;color:#fff;font-weight:bold;transform:scaleX(0.9446);">NEW</div>
<div class="r" style="left:3272px;top:1597px;width:121px;height:76px;background:#5a8dbf;border-radius:6px;box-sizing:border-box;border:2px solid #4f80b0;"></div>
<div class="t" style="left:3301.16px;top:1617.71px;font-size:30.5px;color:#fff;transform:scaleX(0.9420);">View</div>
<div class="r" style="left:3399px;top:1597px;width:127px;height:76px;background:#56a55f;border-radius:6px;box-sizing:border-box;border:2px solid #4b9453;"></div>
<div class="t" style="left:3426.94px;top:1617.71px;font-size:30.5px;color:#fff;transform:scaleX(0.9785);">Done</div>
<div class="r" style="left:543px;top:1691px;width:3230px;height:114px;background:#f9f9f9;"></div>
<div class="r" style="left:543px;top:1691px;width:3230px;height:2px;background:#f4f4f4;"></div>
<div class="t" style="left:567.61px;top:1717.27px;font-size:29.8px;color:#333;transform:scaleX(0.9526);">5835</div>
<div class="t" style="left:761.08px;top:1717.27px;font-size:29.8px;color:#333;transform:scaleX(0.9526);">2023-01-30 23:12:43</div>
<div class="t" style="left:1895.77px;top:1717.27px;font-size:29.8px;color:#333;transform:scaleX(1.0491);">paid</div>
<div class="t" style="left:2566.94px;top:1717.27px;font-size:29.8px;color:#333;transform:scaleX(0.9224);">125 PLN</div>
<div class="t" style="left:2850.87px;top:1717.27px;font-size:29.8px;color:#333;transform:scaleX(0.9224);">30 PLN</div>
<div class="r" style="left:2346px;top:1716px;width:76px;height:40px;background:#56a55f;border-radius:5px;"></div>
<div class="t" style="left:2359.63px;top:1725.27px;font-size:21.5px;color:#fff;font-weight:bold;transform:scaleX(0.9446);">NEW</div>
<div class="r" style="left:3272px;top:1711px;width:121px;height:76px;background:#5a8dbf;border-radius:6px;box-sizing:border-box;border:2px solid #4f80b0;"></div>
<div class="t" style="left:3301.16px;top:1731.67px;font-size:30.5px;color:#fff;transform:scaleX(0.9420);">View</div>
<div class="r" style="left:3399px;top:1711px;width:127px;height:76px;background:#56a55f;border-radius:6px;box-sizing:border-box;border:2px solid #4b9453;"></div>
<div class="t" style="left:3426.94px;top:1731.67px;font-size:30.5px;color:#fff;transform:scaleX(0.9785);">Done</div>
<div class="r" style="left:1227px;top:323px;width:391px;height:1484px;background:#fff;"></div>
</body></html>
